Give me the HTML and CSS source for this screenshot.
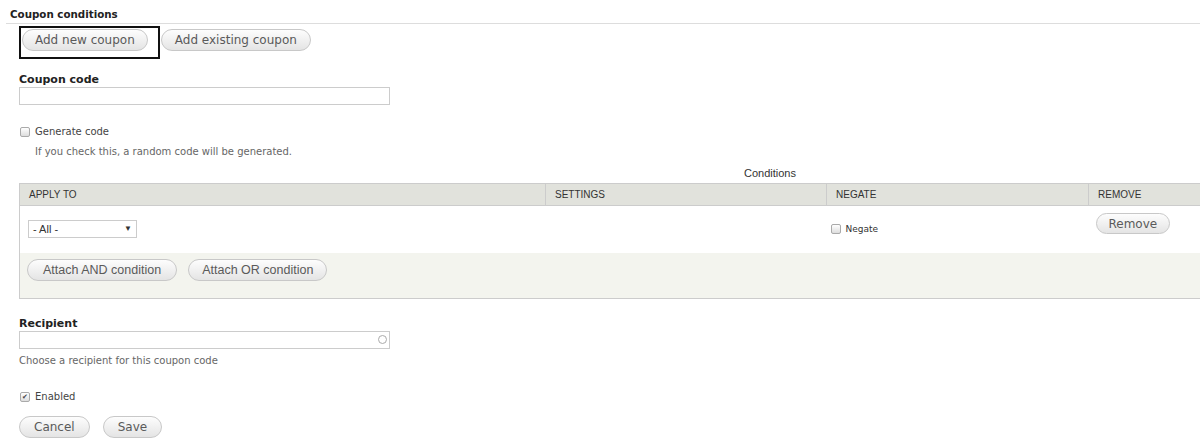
FILE: index.html
```html
<!DOCTYPE html>
<html lang="en">
<head>
    <meta charset="UTF-8">
    <title>Coupon conditions</title>
    <link rel="stylesheet" href="styles.css">
</head>
<body>

    <div class="legend">Coupon conditions</div>

    <div class="coupon-actions">
        <span class="focus-box"><button type="button" class="btn">Add new coupon</button></span>
        <button type="button" class="btn">Add existing coupon</button>
    </div>

    <div class="form-item code-item">
        <label class="field-label">Coupon code</label>
        <input type="text" class="text-input">
    </div>

    <div class="form-item check-item">
        <label class="check"><span class="box"></span>Generate code</label>
        <div class="description indent">If you check this, a random code will be generated.</div>
    </div>

    <div class="table-wrap">
        <table class="conditions">
            <caption>Conditions</caption>
            <thead>
                <tr>
                    <th class="col-apply">Apply to</th>
                    <th class="col-settings">Settings</th>
                    <th class="col-negate">Negate</th>
                    <th class="col-remove">Remove</th>
                </tr>
            </thead>
            <tbody>
                <tr class="row-white">
                    <td>
                        <div class="select">- All -<span class="arrow">&#9660;</span></div>
                    </td>
                    <td></td>
                    <td><label class="check small"><span class="box"></span>Negate</label></td>
                    <td class="cell-remove"><button type="button" class="btn btn-small">Remove</button></td>
                </tr>
                <tr class="row-grey">
                    <td colspan="4">
                        <button type="button" class="btn btn-table">Attach AND condition</button>
                        <button type="button" class="btn btn-table">Attach OR condition</button>
                    </td>
                </tr>
            </tbody>
        </table>
    </div>

    <div class="form-item recipient-item">
        <label class="field-label">Recipient</label>
        <div class="autocomplete">
            <input type="text" class="text-input">
            <span class="throbber"></span>
        </div>
        <div class="description">Choose a recipient for this coupon code</div>
    </div>

    <div class="form-item enabled-item">
        <label class="check"><span class="box checked">&#10004;</span>Enabled</label>
    </div>

    <div class="form-actions">
        <button type="button" class="btn btn-big">Cancel</button>
        <button type="button" class="btn btn-big">Save</button>
    </div>

</body>
</html>
```

FILE: styles.css
```css
html, body {
    overflow: hidden;
}
body {
    margin: 0;
    background: #fff;
    font-family: "DejaVu Sans", Verdana, sans-serif;
    color: #333;
    font-size: 11px;
}
.legend {
    margin: 0 0 0 6px;
    padding: 8px 0 3px 4px;
    font-weight: bold;
    font-size: 10.3px;
    color: #222;
    border-bottom: 1px solid #ddd;
}
.btn {
    font-family: "DejaVu Sans", Verdana, sans-serif;
    font-size: 12px;
    color: #5a5a5a;
    height: 22px;
    margin: 0;
    padding: 0 13px;
    border: 1px solid #c8c8c8;
    border-radius: 12px;
    background: linear-gradient(#fdfdfd, #e4e4e4);
    cursor: pointer;
    line-height: 20px;
}
.coupon-actions {
    margin: 2px 0 0 19px;
    display: flex;
    align-items: flex-start;
    gap: 1px;
}
.focus-box {
    display: inline-block;
    border: 2px solid #111;
    padding: 1px 10px 6px 1px;
}
.focus-box .btn {
    padding: 0 12px;
}
.coupon-actions > .btn {
    margin-top: 3px;
}
.form-item {
    margin-left: 19px;
}
.field-label {
    display: block;
    font-weight: bold;
    font-size: 11px;
    color: #222;
    margin-bottom: 1px;
}
.code-item {
    margin-top: 14px;
}
.text-input {
    display: block;
    box-sizing: border-box;
    width: 371px;
    height: 18px;
    border: 1px solid #ccc;
    margin: 0;
    padding: 0 4px;
}
.check {
    display: flex;
    align-items: center;
    font-size: 10px;
    color: #444;
}
.box {
    width: 8px;
    height: 8px;
    border: 1px solid #aaa;
    border-radius: 2px;
    background: linear-gradient(#fff, #ddd);
    margin: 0 5px 0 1px;
    font-size: 7px;
    line-height: 8px;
    text-align: center;
    color: #444;
}
.check-item {
    margin-top: 21px;
}
.description {
    font-size: 10px;
    color: #666;
    margin-top: 9px;
}
.description.indent {
    margin-left: 16px;
}
.table-wrap {
    margin: 10px 0 0 19px;
    width: 1502px;
}
.conditions {
    width: 100%;
    border-collapse: collapse;
    font-family: "Liberation Sans", Arial, sans-serif;
}
.conditions caption {
    font-size: 11px;
    color: #333;
    padding-bottom: 4px;
}
.conditions th {
    text-align: left;
    font-weight: normal;
    text-transform: uppercase;
    font-size: 10px;
    color: #333;
    background: #e1e2dc;
    border: 1px solid #ccc;
    height: 21px;
    padding: 0 9px;
}
.col-apply { width: 507px; }
.col-settings { width: 262px; }
.col-negate { width: 243px; }
.conditions td {
    padding: 0 8px;
    vertical-align: middle;
}
.row-white {
    height: 47px;
}
.row-white td {
    background: #fff;
}
.row-white td:first-child {
    border-left: 1px solid #ccc;
}
.row-grey td {
    background: #f3f4ee;
    height: 46px;
    box-sizing: border-box;
    border: 1px solid #ccc;
    border-top: none;
    padding: 6px 7px 0;
    vertical-align: top;
}
.select {
    width: 103px;
    height: 16px;
    border: 1px solid #ccc;
    box-sizing: content-box;
    font-size: 11px;
    line-height: 16px;
    padding: 0 0 0 4px;
    position: relative;
    color: #333;
}
.select .arrow {
    position: absolute;
    right: 4px;
    top: 0;
    font-size: 8px;
}
.check.small {
    font-family: "DejaVu Sans", Verdana, sans-serif;
    font-size: 9px;
    color: #333;
}
.check.small .box {
    margin-left: -4px;
}
.conditions td.cell-remove {
    vertical-align: top;
    padding: 7px 0 0 7px;
}
.btn-small {
    height: 21px;
    font-size: 12px;
    padding: 0 12px;
}
.btn-table {
    font-family: "Liberation Sans", Arial, sans-serif;
    font-size: 12.5px;
    padding: 0 15px;
    margin-right: 8px;
}
.btn-table + .btn-table {
    padding: 0 13px;
}
.recipient-item {
    margin-top: 18px;
}
.autocomplete {
    position: relative;
    width: 371px;
}
.throbber {
    position: absolute;
    right: 3px;
    top: 4px;
    width: 7px;
    height: 7px;
    border: 1px solid #aaa;
    border-radius: 50%;
}
.recipient-item .description {
    margin-top: 6px;
}
.enabled-item {
    margin-top: 25px;
}
.form-actions {
    margin: 14px 0 0 19px;
    display: flex;
    gap: 13px;
}
.btn-big {
    font-size: 12px;
    height: 22px;
    padding: 0 14px;
}
```
